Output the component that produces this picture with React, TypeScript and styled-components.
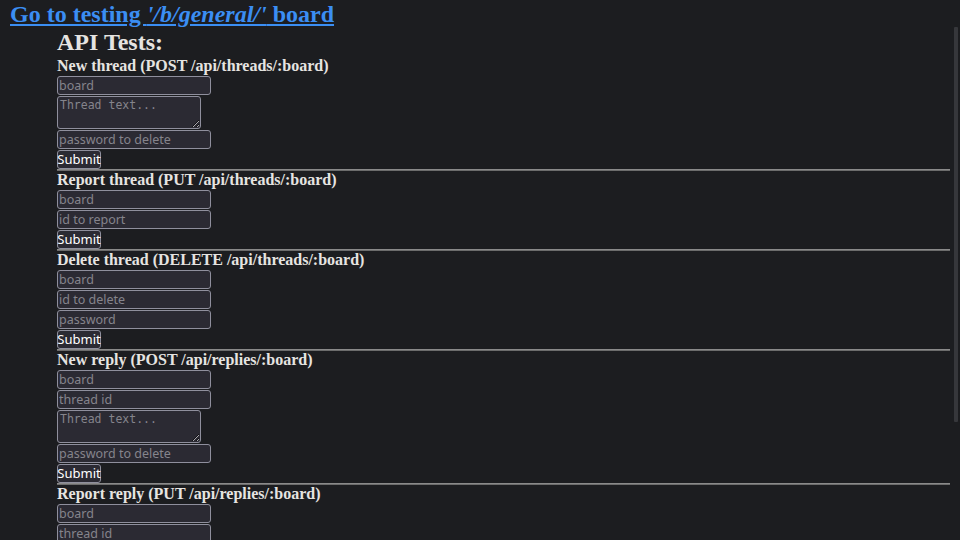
import { FC } from 'react';
import styled, { createGlobalStyle } from 'styled-components';

const GlobalStyle = createGlobalStyle`
  html {
    background: #1c1d20;
  }
  body {
    margin: 0;
    background: #1c1d20;
    color: #e6e4e1;
    font-family: "Liberation Serif", "Times New Roman", serif;
  }
`;

type Field = { placeholder: string; kind?: 'text' | 'area' };

type Test = { title: string; fields: Field[] };

const tests: Test[] = [
  {
    title: 'New thread (POST /api/threads/:board)',
    fields: [
      { placeholder: 'board' },
      { placeholder: 'Thread text...', kind: 'area' },
      { placeholder: 'password to delete' },
    ],
  },
  {
    title: 'Report thread (PUT /api/threads/:board)',
    fields: [{ placeholder: 'board' }, { placeholder: 'id to report' }],
  },
  {
    title: 'Delete thread (DELETE /api/threads/:board)',
    fields: [
      { placeholder: 'board' },
      { placeholder: 'id to delete' },
      { placeholder: 'password' },
    ],
  },
  {
    title: 'New reply (POST /api/replies/:board)',
    fields: [
      { placeholder: 'board' },
      { placeholder: 'thread id' },
      { placeholder: 'Thread text...', kind: 'area' },
      { placeholder: 'password to delete' },
    ],
  },
  {
    title: 'Report reply (PUT /api/replies/:board)',
    fields: [
      { placeholder: 'board' },
      { placeholder: 'thread id' },
      { placeholder: 'reply id' },
    ],
  },
  {
    title: 'Delete reply (DELETE /api/replies/:board)',
    fields: [
      { placeholder: 'board' },
      { placeholder: 'thread id' },
      { placeholder: 'reply id' },
      { placeholder: 'password' },
    ],
  },
];

const App: FC = () => {
  return (
    <>
      <GlobalStyle />
      <Header>
        <BoardLink href="#">
          Go to testing <em>'/b/general/'</em> board
        </BoardLink>
      </Header>
      <Tests>
        <Title>API Tests:</Title>
        {tests.map((test, i) => (
          <TestForm key={i} onSubmit={(e) => e.preventDefault()}>
            {i > 0 && <Rule />}
            <TestTitle>{test.title}</TestTitle>
            {test.fields.map((field, j) =>
              field.kind === 'area' ? (
                <TextArea key={j} placeholder={field.placeholder} />
              ) : (
                <TextInput key={j} type="text" placeholder={field.placeholder} />
              )
            )}
            <SubmitButton type="submit">Submit</SubmitButton>
          </TestForm>
        ))}
      </Tests>
      <ScrollThumb />
    </>
  );
};

export default App;

const Header = styled.h1`
  margin: 0;
  padding-left: 10px;
  font-size: 24px;
  line-height: 28px;
  font-weight: bold;
`;

const BoardLink = styled.a`
  color: #3b8ef3;
  text-decoration: underline;
`;

const Tests = styled.div`
  display: flex;
  flex-direction: column;
  align-items: flex-start;
  margin: 0 10px 0 57px;
  padding-bottom: 8px;
`;

const Title = styled.h2`
  margin: 0;
  font-size: 24px;
  line-height: 29px;
  font-weight: bold;
`;

const TestForm = styled.form`
  display: flex;
  flex-direction: column;
  align-items: flex-start;
  gap: 1px;
  width: 100%;
`;

const Rule = styled.hr`
  width: 100%;
  margin: 0 0 -1px;
  border: none;
  border-top: 1px solid #8a8a8a;
  border-bottom: 1px solid #6c6c6c;
  height: 0;
`;

const TestTitle = styled.h4`
  margin: 0;
  font-size: 16px;
  line-height: 18px;
  font-weight: bold;
  color: #e6e4e1;
`;

const fieldBase = `
  box-sizing: border-box;
  margin: 0;
  background: #2b2a33;
  color: #f0f0f4;
  border: 1px solid #8f8f9d;
  border-radius: 3px;
  outline: none;

  &::placeholder {
    color: #85848c;
  }
`;

const TextInput = styled.input`
  ${fieldBase}
  width: 154px;
  height: 19px;
  padding: 0 1px;
  font-family: "Noto Sans", "DejaVu Sans", sans-serif;
  font-size: 12.5px;
  line-height: 17px;
`;

const TextArea = styled.textarea`
  ${fieldBase}
  width: 144px;
  height: 33px;
  padding: 1px 2px;
  font-family: "DejaVu Sans Mono", monospace;
  font-size: 11.5px;
  line-height: 14px;
  resize: both;
`;

const SubmitButton = styled.button`
  box-sizing: border-box;
  display: flex;
  align-items: center;
  justify-content: center;
  width: 44px;
  height: 19px;
  margin: 0;
  padding: 0 0 1px;
  background: #2b2a33;
  color: #ffffff;
  border: 1px solid #8f8f9d;
  border-radius: 3px;
  font-family: "Noto Sans", "DejaVu Sans", sans-serif;
  font-size: 13px;
  line-height: 15px;
`;

const ScrollThumb = styled.div`
  position: fixed;
  top: 27px;
  right: 2px;
  width: 4px;
  height: 395px;
  background: #36373b;
  border-radius: 1px;
`;
